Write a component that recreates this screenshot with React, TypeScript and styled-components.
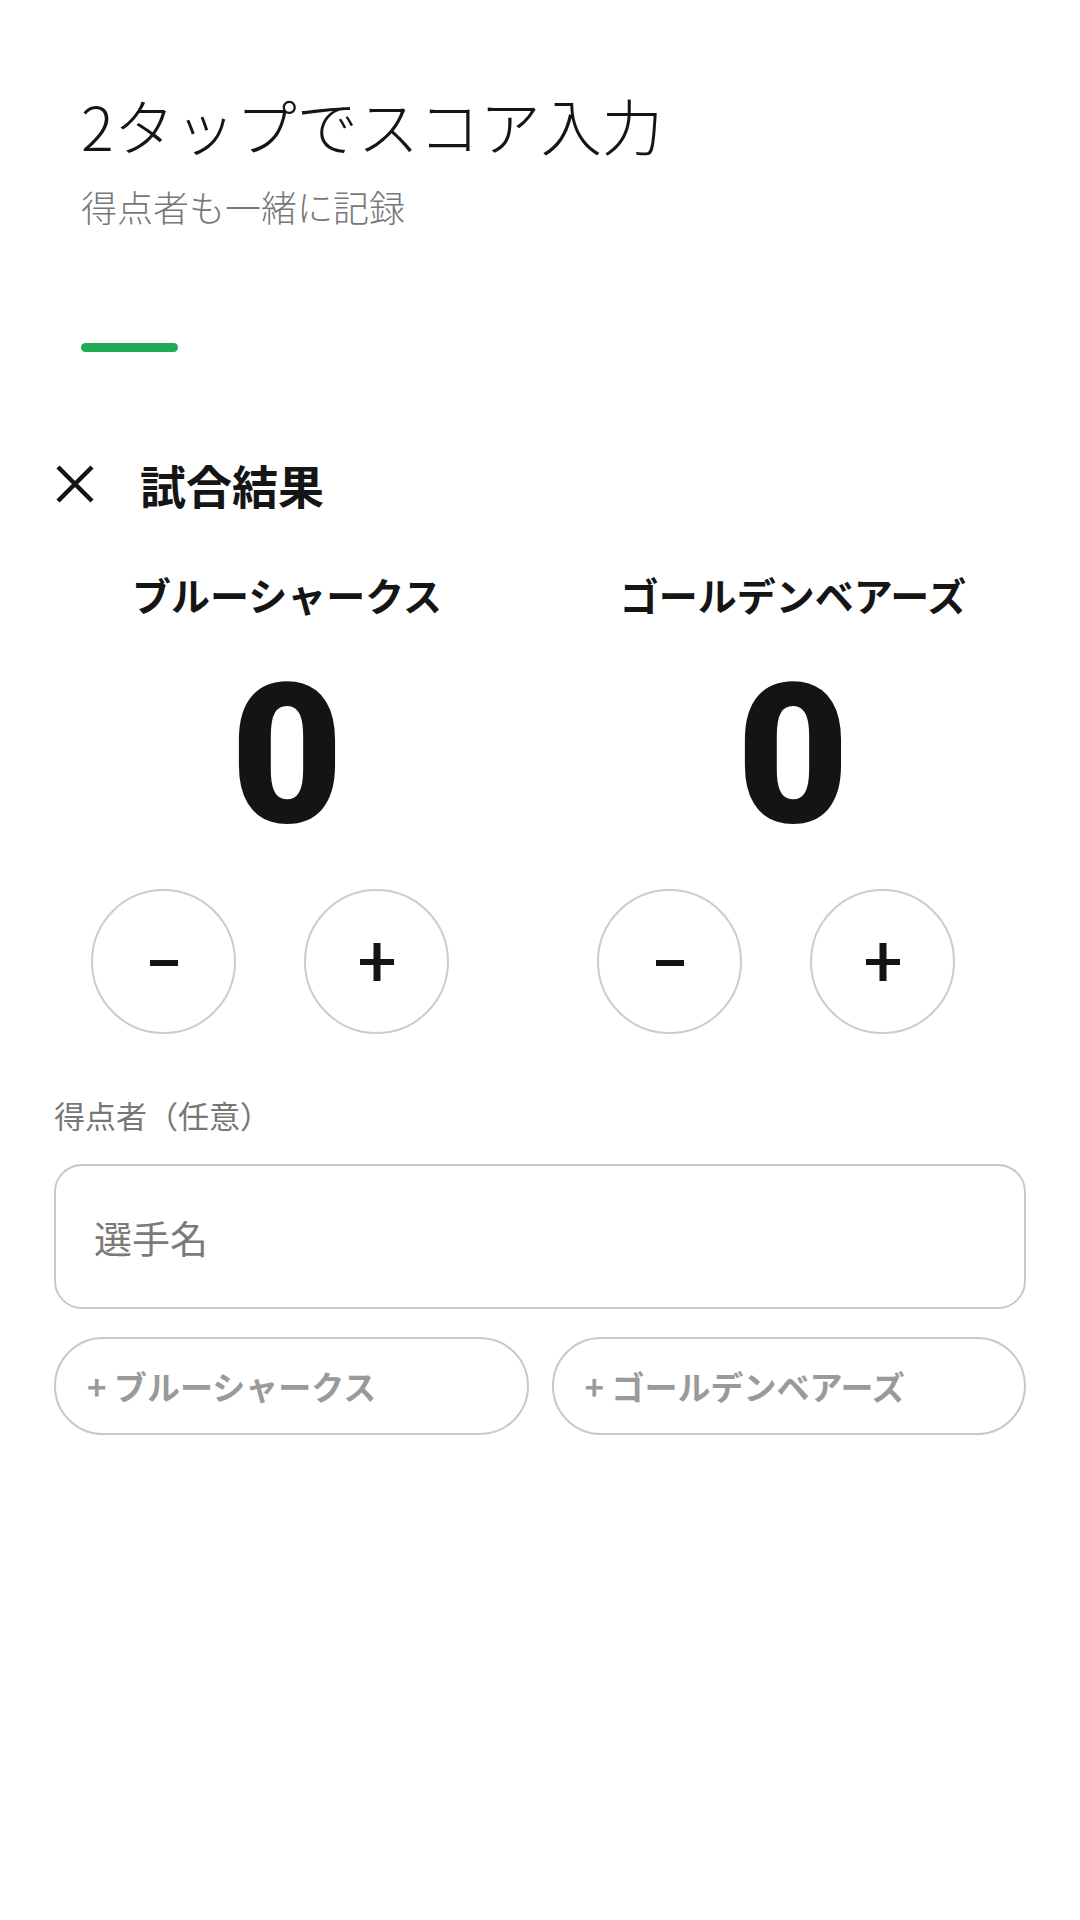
import React from "react";
import styled, { createGlobalStyle } from "styled-components";

const GlobalStyle = createGlobalStyle`
  html, body {
    margin: 0;
    padding: 0;
    background: #ffffff;
  }
  body {
    font-family: "Noto Sans CJK JP", "Noto Sans", sans-serif;
    color: #111111;
  }
  * { box-sizing: border-box; }
`;

const Page = styled.div`
  width: 1080px;
  min-height: 1920px;
  background: #ffffff;
  display: flex;
  flex-direction: column;
`;

const Hero = styled.header`
  padding: 88px 81px 0;
  display: flex;
  flex-direction: column;
`;

const Title = styled.h1`
  margin: 0;
  font-size: 61px;
  line-height: 73px;
  font-weight: 300;
  color: #151515;
`;

const Subtitle = styled.p`
  margin: 24px 0 0;
  font-size: 36px;
  line-height: 43px;
  font-weight: 300;
  color: #777777;
`;

const AccentBar = styled.div`
  margin-top: 115px;
  width: 97px;
  height: 9px;
  border-radius: 5px;
  background: #1faa53;
`;

const Main = styled.main`
  padding: 0 54px;
  margin-top: 102px;
  display: flex;
  flex-direction: column;
`;

const SheetHeader = styled.div`
  display: flex;
  align-items: center;
  height: 60px;
  gap: 44px;
`;

const CloseButton = styled.button`
  width: 42px;
  height: 42px;
  padding: 0;
  border: none;
  background: transparent;
  display: flex;
  align-items: center;
  justify-content: center;
  cursor: pointer;
`;

const SheetTitle = styled.h2`
  margin: 0;
  font-size: 46px;
  line-height: 60px;
  font-weight: 700;
  color: #151515;
`;

const TeamsGrid = styled.div`
  margin-top: 55px;
  display: grid;
  grid-template-columns: 1fr 1fr;
  column-gap: 40px;
`;

const TeamColumn = styled.section`
  display: flex;
  flex-direction: column;
  align-items: center;
`;

const TeamName = styled.div`
  font-size: 39px;
  line-height: 50px;
  font-weight: 700;
  color: #151515;
  white-space: nowrap;
`;

const Score = styled.div`
  margin-top: 39px;
  font-family: Roboto, "Noto Sans", sans-serif;
  font-size: 194px;
  line-height: 196px;
  font-weight: 900;
  color: #141414;
`;

const StepperRow = styled.div`
  margin-top: 35px;
  align-self: stretch;
  padding-right: 34px;
  display: flex;
  justify-content: center;
  gap: 68px;
`;

const RoundButton = styled.button`
  width: 145px;
  height: 145px;
  border-radius: 50%;
  border: 2px solid #cccccc;
  background: #ffffff;
  padding: 0;
  display: flex;
  align-items: center;
  justify-content: center;
  cursor: pointer;
`;

const FieldLabel = styled.div`
  margin-top: 61px;
  font-size: 31px;
  line-height: 40px;
  color: #777777;
`;

const NameInput = styled.input`
  margin-top: 29px;
  width: 100%;
  height: 145px;
  border: 2px solid #c8c8c8;
  border-radius: 28px;
  padding: 0 38px;
  font-family: "Noto Sans CJK JP", "Noto Sans", sans-serif;
  font-size: 38px;
  color: #222222;
  background: #ffffff;
  outline: none;
  &::placeholder {
    color: #7a7a7a;
  }
`;

const ChipRow = styled.div`
  margin-top: 28px;
  display: grid;
  grid-template-columns: 1fr 1fr;
  column-gap: 23px;
`;

const TeamChip = styled.button`
  height: 98px;
  border: 2px solid #c8c8c8;
  border-radius: 49px;
  background: #ffffff;
  padding: 0 0 0 31px;
  text-align: left;
  font-family: "Noto Sans CJK JP", "Noto Sans", sans-serif;
  font-size: 33px;
  font-weight: 700;
  color: #9a9a9a;
  white-space: nowrap;
  cursor: pointer;
`;

const CloseIcon = () => (
  <svg width="38" height="38" viewBox="0 0 38 38">
    <path d="M2 2 L36 36 M36 2 L2 36" stroke="#151515" strokeWidth="4.5" strokeLinecap="butt" />
  </svg>
);

const MinusIcon = () => (
  <svg width="34" height="34" viewBox="0 0 34 34">
    <rect x="3" y="15" width="28" height="6" fill="#141414" />
  </svg>
);

const PlusIcon = () => (
  <svg width="34" height="38" viewBox="0 0 34 38">
    <rect x="0" y="16" width="34" height="6" fill="#141414" />
    <rect x="13.5" y="0" width="7" height="38" fill="#141414" />
  </svg>
);

const teams = [
  { name: "ブルーシャークス", score: 0 },
  { name: "ゴールデンベアーズ", score: 0 },
];

export default function App() {
  return (
    <>
      <GlobalStyle />
      <Page>
        <Hero>
          <Title>2タップでスコア入力</Title>
          <Subtitle>得点者も一緒に記録</Subtitle>
          <AccentBar />
        </Hero>
        <Main>
          <SheetHeader>
            <CloseButton aria-label="閉じる">
              <CloseIcon />
            </CloseButton>
            <SheetTitle>試合結果</SheetTitle>
          </SheetHeader>
          <TeamsGrid>
            {teams.map((t) => (
              <TeamColumn key={t.name}>
                <TeamName>{t.name}</TeamName>
                <Score>{t.score}</Score>
                <StepperRow>
                  <RoundButton aria-label="減らす">
                    <MinusIcon />
                  </RoundButton>
                  <RoundButton aria-label="増やす">
                    <PlusIcon />
                  </RoundButton>
                </StepperRow>
              </TeamColumn>
            ))}
          </TeamsGrid>
          <FieldLabel>得点者（任意）</FieldLabel>
          <NameInput placeholder="選手名" />
          <ChipRow>
            {teams.map((t) => (
              <TeamChip key={t.name}>+ {t.name}</TeamChip>
            ))}
          </ChipRow>
        </Main>
      </Page>
    </>
  );
}
